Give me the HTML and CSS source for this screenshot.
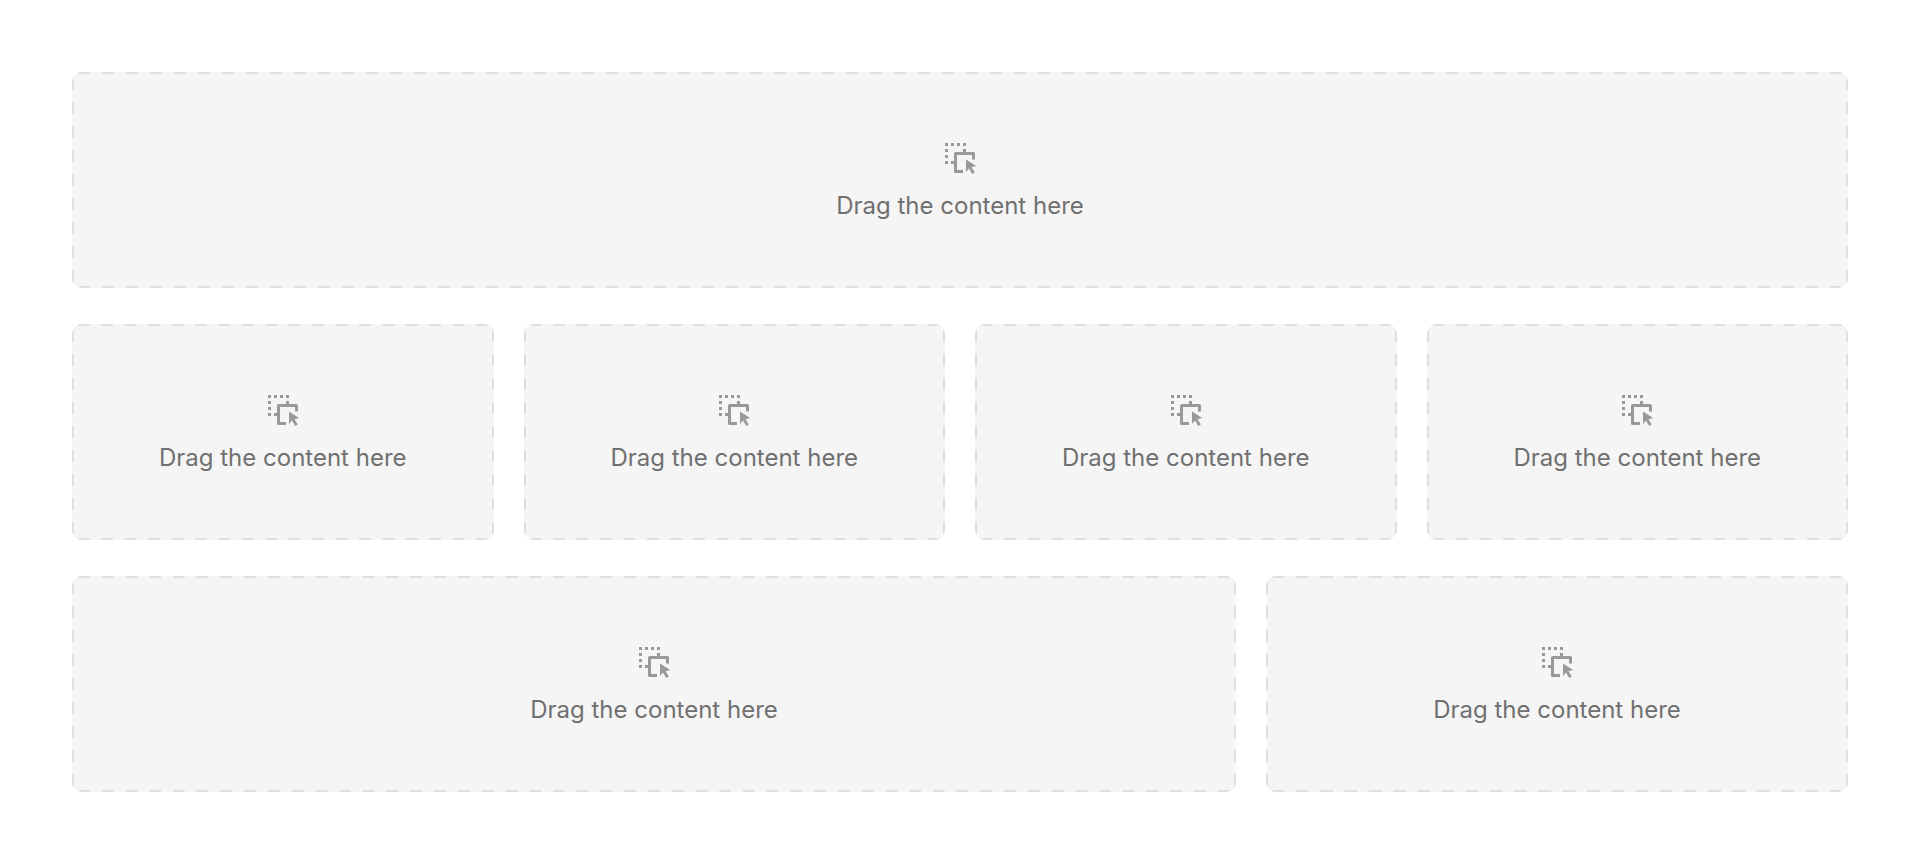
FILE: index.html
```html
<!DOCTYPE html>
<html lang="en">
<head>
<meta charset="utf-8">
<title>Layout</title>
<link rel="stylesheet" href="styles.css">
</head>
<body>
<svg class="symbols" aria-hidden="true">
  <symbol id="drag" viewBox="0 0 36 36">
    <path d="M3 3h3v3H3zM9 3h3v3H9zM15 3h3v3h-3zM21 3h3v3h-3zM3 9h3v3H3zM3 15h3v3H3zM3 21h3v3H3zM9 21h3v3H9z"/>
    <path d="M21 9h3v3h7.500Q33 12 33 13.500V19.500h-3V15H15v15h6v3h-7.500Q12 33 12 31.500V13.500Q12 12 13.500 12H21z"/>
    <path d="M24 19.500l10.200 6.500-4.700 1.200 3.300 5.300-2.600 1.500-3.200-5.400-3 3.300z"/>
  </symbol>
</svg>
<main class="layout">
  <div class="row row-full">
    <section class="slot"><svg class="icon" aria-hidden="true"><use href="#drag"/></svg><p class="label">Drag the content here</p></section>
  </div>
  <div class="row row-quarters">
    <section class="slot"><svg class="icon" aria-hidden="true"><use href="#drag"/></svg><p class="label">Drag the content here</p></section>
    <section class="slot"><svg class="icon" aria-hidden="true"><use href="#drag"/></svg><p class="label">Drag the content here</p></section>
    <section class="slot"><svg class="icon" aria-hidden="true"><use href="#drag"/></svg><p class="label">Drag the content here</p></section>
    <section class="slot"><svg class="icon" aria-hidden="true"><use href="#drag"/></svg><p class="label">Drag the content here</p></section>
  </div>
  <div class="row row-thirds">
    <section class="slot"><svg class="icon" aria-hidden="true"><use href="#drag"/></svg><p class="label">Drag the content here</p></section>
    <section class="slot"><svg class="icon" aria-hidden="true"><use href="#drag"/></svg><p class="label">Drag the content here</p></section>
  </div>
</main>
</body>
</html>
```
FILE: styles.css
```css
* { box-sizing: border-box; }
body { margin: 0; background: #fff; font-family: Inter, sans-serif; }
.symbols { display: none; }
.layout { display: flex; flex-direction: column; gap: 36px; padding: 72px; }
.row { display: grid; gap: 30px; }
.row-full { grid-template-columns: 1fr; }
.row-quarters { grid-template-columns: repeat(4, 1fr); }
.row-thirds { grid-template-columns: 2fr 1fr; }
.slot {
  --dash-x: linear-gradient(90deg, transparent 25%, #dfdfdf 25% 75%, transparent 75%);
  --dash-y: linear-gradient(transparent 25%, #dfdfdf 25% 75%, transparent 75%);
  display: flex;
  flex-direction: column;
  align-items: center;
  justify-content: center;
  gap: 16px;
  min-height: 216px;
  border-radius: 10px;
  background-color: #f5f5f5;
  background-image: var(--dash-x), var(--dash-x), var(--dash-y), var(--dash-y);
  background-position: left top, left bottom, left top, right top;
  background-size: 24px 2px, 24px 2px, 2px 24px, 2px 24px;
  background-repeat: round no-repeat, round no-repeat, no-repeat round, no-repeat round;
}
.icon { width: 36px; height: 36px; fill: #999; }
.label { margin: 0; font-size: 24px; line-height: 28px; color: #707070; }
```
